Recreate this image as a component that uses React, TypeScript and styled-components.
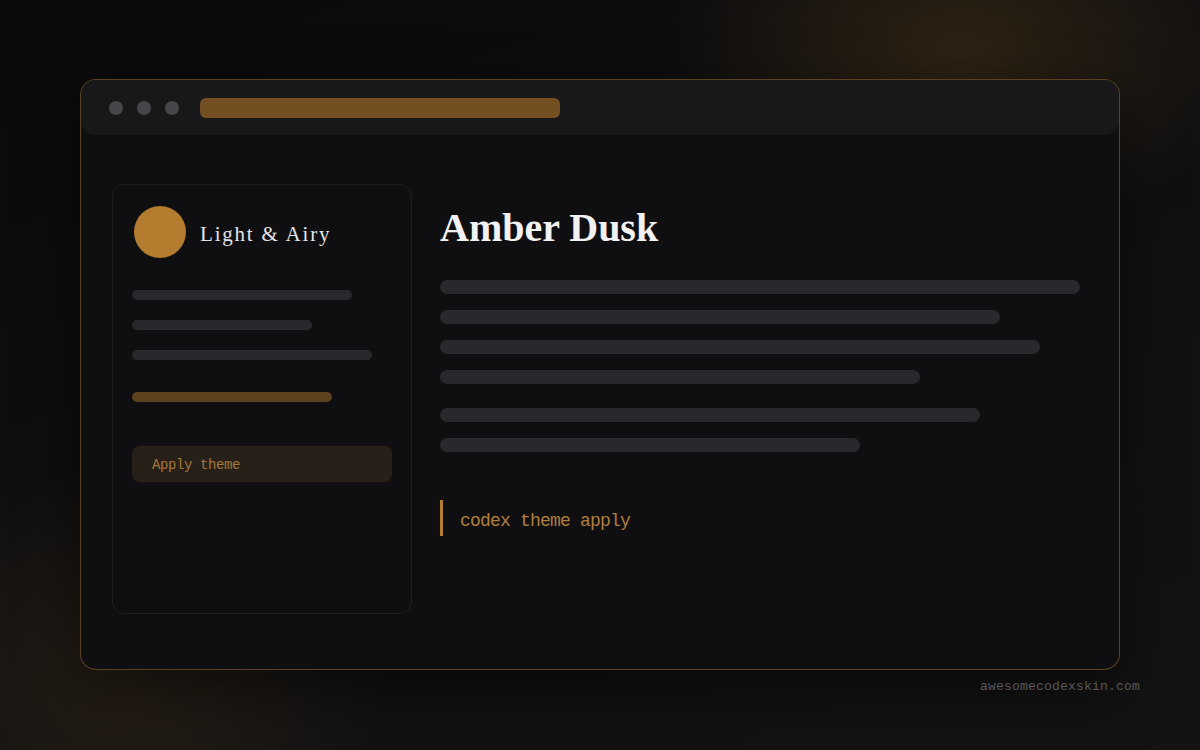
import styled, { createGlobalStyle } from "styled-components"

const GlobalStyle = createGlobalStyle`
    html, body {
        margin: 0;
        padding: 0;
        height: 100%;
    }
    body {
        background-color: #0d0d0e;
        background-image:
            radial-gradient(ellipse 300px 190px at 960px 50px, rgba(150, 100, 30, 0.24), rgba(150, 100, 30, 0) 100%),
            radial-gradient(ellipse 260px 220px at 130px 680px, rgba(150, 100, 30, 0.15), rgba(150, 100, 30, 0) 100%),
            linear-gradient(160deg, #0a0a0b 0%, #111112 60%, #131314 100%);
        font-family: "Liberation Sans", sans-serif;
    }
`

const sideLines = [220, 180, 240]
const mainLines = [
    [640, 560, 600, 480],
    [540, 420],
]

const App = () => {
    return (
        <>
            <GlobalStyle />
            <Page>
                <Window>
                    <TitleBar>
                        <Dots>
                            <Dot />
                            <Dot />
                            <Dot />
                        </Dots>
                        <Address />
                    </TitleBar>
                    <Body>
                        <Sidebar>
                            <Header>
                                <Avatar />
                                <ThemeName>Light &amp; Airy</ThemeName>
                            </Header>
                            <SideLines>
                                {sideLines.map((w, i) => (
                                    <SideLine key={i} style={{ width: w }} />
                                ))}
                            </SideLines>
                            <AccentLine />
                            <ApplyButton>Apply theme</ApplyButton>
                        </Sidebar>
                        <Main>
                            <Title>Amber Dusk</Title>
                            {mainLines.map((group, g) => (
                                <LineGroup key={g}>
                                    {group.map((w, i) => (
                                        <TextLine key={i} style={{ width: w }} />
                                    ))}
                                </LineGroup>
                            ))}
                            <Command>codex theme apply</Command>
                        </Main>
                    </Body>
                </Window>
                <Footer>awesomecodexskin.com</Footer>
            </Page>
        </>
    )
}

export default App

const Page = styled.div`
    width: 1200px;
    height: 750px;
    box-sizing: border-box;
    padding: 79px 80px 0 80px;
    display: flex;
    flex-direction: column;
`

const Window = styled.div`
    width: 1040px;
    height: 591px;
    box-sizing: border-box;
    border: 1px solid rgba(170, 118, 45, 0.5);
    border-radius: 16px;
    background: #0f0f11;
    overflow: hidden;
    display: flex;
    flex-direction: column;
    box-shadow: 0 20px 60px rgba(0, 0, 0, 0.5);
`

const TitleBar = styled.div`
    height: 55px;
    background: #18181b;
    display: flex;
    align-items: center;
    padding: 0 0 0 28px;
    gap: 21px;
    border-radius: 0 0 14px 14px;
`

const Dots = styled.div`
    display: flex;
    gap: 14px;
`

const Dot = styled.span`
    width: 14px;
    height: 14px;
    border-radius: 50%;
    background: #46464b;
`

const Address = styled.div`
    width: 360px;
    height: 20px;
    border-radius: 6px;
    background: #734f22;
`

const Body = styled.div`
    flex: 1;
    display: flex;
    gap: 28px;
    padding: 49px 39px 0 31px;
`

const Sidebar = styled.div`
    width: 300px;
    height: 430px;
    box-sizing: border-box;
    border: 1px solid #1f1f23;
    border-radius: 12px;
    padding: 21px 19px;
    display: flex;
    flex-direction: column;
`

const Header = styled.div`
    display: flex;
    align-items: center;
    gap: 14px;
    margin-left: 2px;
`

const Avatar = styled.div`
    width: 52px;
    height: 52px;
    border-radius: 50%;
    background: #b47c2e;
`

const ThemeName = styled.span`
    font-family: "Liberation Serif", serif;
    font-size: 21px;
    letter-spacing: 1.8px;
    color: #e4e4e6;
    margin-top: 5px;
`

const SideLines = styled.div`
    display: flex;
    flex-direction: column;
    gap: 20px;
    margin-top: 32px;
`

const SideLine = styled.div`
    height: 10px;
    border-radius: 5px;
    background: #29292d;
`

const AccentLine = styled.div`
    width: 200px;
    height: 10px;
    border-radius: 5px;
    background: #5e421e;
    margin-top: 32px;
`

const ApplyButton = styled.div`
    width: 260px;
    height: 36px;
    box-sizing: border-box;
    margin-top: 44px;
    border-radius: 8px;
    background: #262018;
    padding: 2px 0 0 20px;
    display: flex;
    align-items: center;
    font-family: "Liberation Mono", monospace;
    font-size: 14px;
    letter-spacing: -0.4px;
    color: #a57838;
`

const Main = styled.div`
    flex: 1;
    display: flex;
    flex-direction: column;
`

const Title = styled.h1`
    margin: 20px 0 0 0;
    font-family: "Liberation Serif", serif;
    font-weight: bold;
    font-size: 40px;
    line-height: 48px;
    color: #f2f2f2;
`

const LineGroup = styled.div`
    display: flex;
    flex-direction: column;
    gap: 16px;
    margin-top: 24px;
    &:first-of-type {
        margin-top: 28px;
    }
`

const TextLine = styled.div`
    height: 14px;
    border-radius: 7px;
    background: #29292d;
`

const Command = styled.div`
    margin-top: 48px;
    height: 36px;
    box-sizing: border-box;
    border-left: 3px solid #b47c2e;
    padding: 5px 0 0 17px;
    display: flex;
    align-items: center;
    font-family: "Liberation Mono", monospace;
    font-size: 18px;
    letter-spacing: -0.8px;
    color: #b07e3e;
`

const Footer = styled.div`
    width: 1060px;
    text-align: right;
    margin-top: 9px;
    font-family: "Liberation Mono", monospace;
    font-size: 13px;
    letter-spacing: 0.2px;
    color: #58585c;
`
